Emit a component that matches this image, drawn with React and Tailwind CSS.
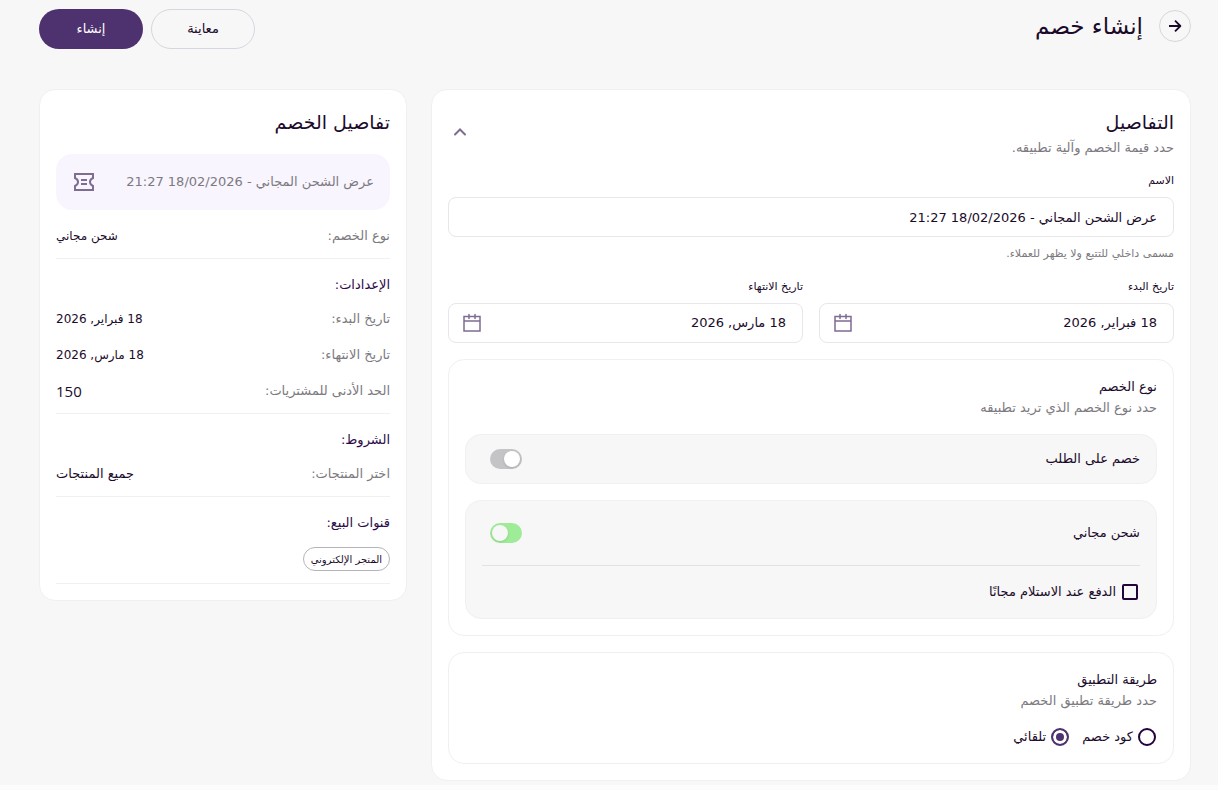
import React, { useState } from 'react'

const ArrowIcon = () => (
  <svg className="w-6 h-6" viewBox="0 0 24 24" fill="none" stroke="currentColor" strokeWidth="1.8" strokeLinejoin="round" aria-hidden="true">
    <path d="M6 12h11M12 6.6l5.400 5.400-5.400 5.400" />
  </svg>
);

const TicketIcon = () => (
  <svg className="w-6 h-6 text-[#7f6c91]" viewBox="0 0 24 24" fill="none" stroke="currentColor" strokeWidth="2" aria-hidden="true">
    <path d="M3 4h18v4c-2 .9-3 2.200-3 4s1 3.100 3 4v4H3v-4c2-.9 3-2.200 3-4S5 8.900 3 8z" />
    <path d="M9 10h6M9 14h6" />
  </svg>
);

const CalendarIcon = () => (
  <svg className="w-6 h-6 shrink-0 text-[#7f6c91]" viewBox="0 0 24 24" fill="none" stroke="currentColor" strokeWidth="1.5" strokeLinecap="round" aria-hidden="true">
    <path d="M4 5.500h16v14.500H4zM4 10h16M9 3.500v4M15 3.500v4" />
  </svg>
);

const DateField = ({ id, label, value }) => (
  <div className="flex-1 min-w-0">
    <label htmlFor={id} className="block text-[11px] leading-4 mb-2">{label}</label>
    <div className="h-10 flex items-center border border-[#e7e6ea] rounded-lg ps-4 pe-[11px]">
      <input id={id} type="text" defaultValue={value} className="flex-1 min-w-0 bg-transparent text-[13px] outline-none" />
      <CalendarIcon />
    </div>
  </div>
);

const Toggle = ({ id, checked, onChange }) => (
  <input
    id={id}
    type="checkbox"
    role="switch"
    checked={checked}
    onChange={onChange}
    className="appearance-none w-8 h-5 me-2 p-0.5 flex items-center rounded-full bg-[#c4c4c6] checked:bg-[#9eec97] checked:justify-end cursor-pointer before:content-[''] before:w-4 before:h-4 before:rounded-full before:bg-white checked:before:bg-[#f7f7f7] before:shadow-sm"
  />
);

const SectionTitle = ({ title, text }) => (
  <div className="mb-4">
    <h3 className="text-[13px] leading-[22px] font-medium">{title}</h3>
    <p className="text-[13px] leading-5 text-[#7c7a80]">{text}</p>
  </div>
);

const SummaryTitle = ({ children }) => (
  <h3 className="mt-4 mb-[14px] text-[13px] leading-5 font-medium text-[#2d0a4a]">{children}</h3>
);

const SummaryRow = ({ label, value, valueClass = 'text-[12px]' }) => (
  <div className="flex items-center justify-between leading-5">
    <dt className="text-[13px] text-[#7c7a80]">{label}</dt>
    <dd className={valueClass}>{value}</dd>
  </div>
);

const radioClass = "appearance-none w-[18px] h-[18px] m-px rounded-full border-2 border-[#22033a] checked:border-[#4e326f] checked:bg-[#4e326f] checked:shadow-[inset_0_0_0_3px_#fff]";

const App = () => {

  const [orderDiscount, setOrderDiscount] = useState(false);
  const [freeShipping, setFreeShipping] = useState(true);

  const name = 'عرض الشحن المجاني - 18/02/2026 21:27';

  return (
    <div dir="rtl" lang="ar" className="min-h-screen bg-[#fcfcfc] text-[#1b0b2b] font-['DejaVu_Sans',sans-serif]">
      <div className="bg-[#f7f7f7] ps-[27px] pe-[15px] pt-[9px] pb-1">

        {/* Page header */}
        <header className="flex items-start justify-between pe-6 mb-10">
          <div className="flex items-center gap-4 h-[34px]">
            <button aria-label="رجوع" className="w-8 h-8 rounded-full border border-[#d9d5df] flex items-center justify-center cursor-pointer">
              <ArrowIcon />
            </button>
            <h1 className="text-[23px] leading-8 font-medium">إنشاء خصم</h1>
          </div>
          <div className="flex gap-2">
            <button className="w-[104px] h-10 rounded-full border border-[#d9d5df] text-[13px] cursor-pointer">معاينة</button>
            <button className="w-[104px] h-10 rounded-full bg-[#4e326f] text-white text-[13px] cursor-pointer">إنشاء</button>
          </div>
        </header>

        <div className="flex items-start">
          {/* Discount form */}
          <main className="w-2/3 pe-6">
            <div className="bg-white border border-[#f0f0f0] rounded-2xl p-4">
              <div className="flex items-center justify-between">
                <div>
                  <h2 className="text-[19px] leading-8">التفاصيل</h2>
                  <p className="text-[13px] leading-5 text-[#7c7a80]">حدد قيمة الخصم وآلية تطبيقه.</p>
                </div>
                <button aria-label="طي" className="w-6 h-6 flex items-center justify-center text-[#7f6c91] cursor-pointer">
                  <svg className="w-6 h-6" viewBox="0 0 24 24" fill="none" stroke="currentColor" strokeWidth="2" strokeLinecap="round">
                    <path d="M7 14.500L12 9.500l5 5" />
                  </svg>
                </button>
              </div>

              <label htmlFor="name" className="block text-[11px] leading-4 mt-[15px] mb-2">الاسم</label>
              <input id="name" type="text" defaultValue={name} className="block w-full h-10 border border-[#e7e6ea] rounded-lg px-4 text-[13px] outline-none" />
              <p className="text-[11px] leading-[18px] mt-2 text-[#7c7a80]">مسمى داخلي للتتبع ولا يظهر للعملاء.</p>

              <div className="flex gap-4 mt-4">
                <DateField id="start" label="تاريخ البدء" value="18 فبراير, 2026" />
                <DateField id="end" label="تاريخ الانتهاء" value="18 مارس, 2026" />
              </div>

              <section className="mt-4 border border-[#f0f0f0] rounded-2xl p-4">
                <SectionTitle title="نوع الخصم" text="حدد نوع الخصم الذي تريد تطبيقه" />
                <div className="h-[50px] flex items-center justify-between px-4 bg-[#f7f7f7] border border-[#f0f0f0] rounded-2xl">
                  <label htmlFor="order" className="text-[13px]">خصم على الطلب</label>
                  <Toggle id="order" checked={orderDiscount} onChange={() => setOrderDiscount(!orderDiscount)} />
                </div>
                <div className="mt-4 p-4 bg-[#f7f7f7] border border-[#f0f0f0] rounded-2xl">
                  <div className="h-8 flex items-center justify-between">
                    <label htmlFor="shipping" className="text-[13px]">شحن مجاني</label>
                    <Toggle id="shipping" checked={freeShipping} onChange={() => setFreeShipping(!freeShipping)} />
                  </div>
                  <label className="mt-4 pt-4 border-t border-[#e2e2e4] flex items-center gap-1 text-[13px] leading-5">
                    <input type="checkbox" className="appearance-none w-4 h-4 mx-0.5 rounded-[2px] border-2 border-[#22033a] checked:bg-[#22033a]" />
                    الدفع عند الاستلام مجانًا
                  </label>
                </div>
              </section>

              <section className="mt-4 border border-[#f0f0f0] rounded-2xl p-4">
                <SectionTitle title="طريقة التطبيق" text="حدد طريقة تطبيق الخصم" />
                <div className="flex gap-3 text-[13px] leading-5">
                  <label className="flex items-center gap-1">
                    <input type="radio" name="method" className={radioClass} />
                    كود خصم
                  </label>
                  <label className="flex items-center gap-1">
                    <input type="radio" name="method" defaultChecked className={radioClass} />
                    تلقائي
                  </label>
                </div>
              </section>
            </div>
          </main>

          {/* Summary */}
          <aside className="w-1/3 pe-6">
            <div className="bg-white border border-[#f0f0f0] rounded-2xl p-4">
              <h2 className="text-[19px] leading-8 mb-4">تفاصيل الخصم</h2>
              <div className="h-14 flex items-center justify-between px-4 rounded-2xl bg-[#f8f5ff] text-[13px] text-[#7c7a80]">
                <span>{name}</span>
                <TicketIcon />
              </div>
              <dl className="mt-4 pb-3 border-b border-[#f0f0f0]">
                <SummaryRow label="نوع الخصم:" value="شحن مجاني" />
              </dl>

              <SummaryTitle>الإعدادات:</SummaryTitle>
              <dl className="pb-3 border-b border-[#f0f0f0] flex flex-col gap-4">
                <SummaryRow label="تاريخ البدء:" value="18 فبراير, 2026" />
                <SummaryRow label="تاريخ الانتهاء:" value="18 مارس, 2026" />
                <SummaryRow label="الحد الأدنى للمشتريات:" value="150" valueClass="text-[15px] font-['Open_Sans',sans-serif]" />
              </dl>

              <SummaryTitle>الشروط:</SummaryTitle>
              <dl className="pb-3 border-b border-[#f0f0f0]">
                <SummaryRow label="اختر المنتجات:" value="جميع المنتجات" valueClass="text-[13px]" />
              </dl>

              <SummaryTitle>قنوات البيع:</SummaryTitle>
              <div className="pb-3 border-b border-[#f0f0f0] flex">
                <span className="h-6 flex items-center px-[7px] rounded-full border border-[#b5b3b8] text-[10px]">المتجر الإلكتروني</span>
              </div>
            </div>
          </aside>
        </div>
      </div>
    </div>
  );
}

export default App
